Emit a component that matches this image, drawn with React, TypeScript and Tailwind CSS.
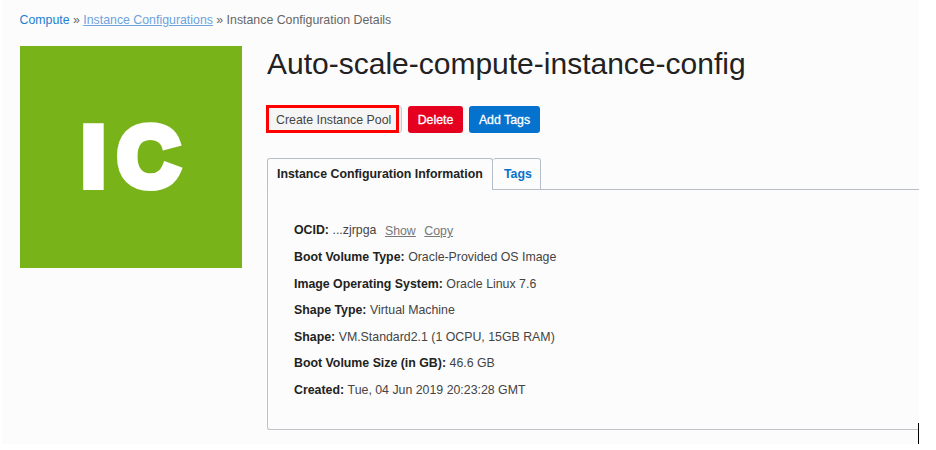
const details = [
  { label: "Boot Volume Type:", value: "Oracle-Provided OS Image" },
  { label: "Image Operating System:", value: "Oracle Linux 7.6" },
  { label: "Shape Type:", value: "Virtual Machine" },
  { label: "Shape:", value: "VM.Standard2.1 (1 OCPU, 15GB RAM)" },
  { label: "Boot Volume Size (in GB):", value: "46.6 GB" },
  { label: "Created:", value: "Tue, 04 Jun 2019 20:23:28 GMT" },
];

function Breadcrumb() {
  return (
    <nav className="-ml-[0.5px] flex h-[46px] gap-[3.4px] pt-[12px] text-[#666]">
      <a className="text-[#1b7fd0]">Compute</a>
      <span>»</span>
      <a className="text-[#6ea3dc] underline underline-offset-1">Instance Configurations</a>
      <span>»</span>
      <span>Instance Configuration Details</span>
    </nav>
  );
}

function Actions() {
  return (
    <div className="flex h-[27px]">
      <div className="relative mr-[6px] w-[135px]">
        <button className="h-[27px] w-[135px] rounded-[3px] border border-[#c4c8cf] bg-[#f5f5f5] pl-[8px] pt-px text-left text-[#444]">
          Create Instance Pool
        </button>
        <div className="absolute -left-px -top-px h-[28px] w-[133px] border-[3px] border-[#fe0000]" />
      </div>
      <button className="mr-[6px] w-[55px] rounded-[3px] bg-[#e5001f] pt-px text-white [-webkit-text-stroke:0.3px_white]">
        Delete
      </button>
      <button className="w-[71px] rounded-[3px] bg-[#0572ce] pt-px text-white [-webkit-text-stroke:0.3px_white]">
        Add Tags
      </button>
    </div>
  );
}

function Tabs() {
  return (
    <div className="flex h-8 font-bold">
      <div className="w-[226px] rounded-t-[3px] border border-b-0 border-[#b8bec8] pl-[9px] pt-[7px] text-[#222]">
        Instance Configuration Information
      </div>
      <div className="w-[48px] rounded-t-[3px] border border-l-0 border-[#b8bec8] pl-[11px] pt-[7px] text-[#0572ce]">
        Tags
      </div>
      <div className="flex-1 border-b border-[#b8bec8]" />
    </div>
  );
}

function Details() {
  return (
    <div className="h-[240px] rounded-bl-[3px] border-b border-l border-[#bfc1c8] pl-[26px] pt-[32px] text-[#444]">
      <div className="flex h-[27px]">
        <b className="mr-[3.5px] text-[#222]">OCID:</b>
        <span>...zjrpga</span>
        <a className="ml-[8.5px] mt-px text-[#777] underline underline-offset-1">Show</a>
        <a className="ml-[8.5px] mt-px text-[#777] underline underline-offset-1">Copy</a>
      </div>
      {details.map((d) => (
        <div key={d.label} className="flex h-[26.5px] gap-[3.5px]">
          <b className="text-[#222]">{d.label}</b>
          <span>{d.value}</span>
        </div>
      ))}
    </div>
  );
}

export default function App() {
  return (
    <div className="relative h-[450px] w-[936px] overflow-hidden bg-white pl-[2px] font-['Liberation_Sans',Arial,sans-serif] text-[12.35px] leading-[17px]">
      <main className="h-[444px] w-[917px] bg-[#fcfcfc] pl-[18px]">
        <Breadcrumb />
        <div className="flex">
          <div className="mr-[25px] flex h-[222px] w-[222px] shrink-0 items-center justify-center bg-[#78b319] pb-[2px] pl-[11px]">
            <span className="text-[86px] font-bold leading-none tracking-[12px] text-white [-webkit-text-stroke:8px_white]">
              IC
            </span>
          </div>
          <section className="flex-1">
            <h1 className="h-[60px] text-[30px] leading-[36px] text-[#222]">
              Auto-scale-compute-instance-config
            </h1>
            <Actions />
            <div className="h-[25px]" />
            <Tabs />
            <Details />
          </section>
        </div>
      </main>
      <div className="absolute left-[918px] top-[423px] h-[21px] w-px bg-black" />
    </div>
  );
}
